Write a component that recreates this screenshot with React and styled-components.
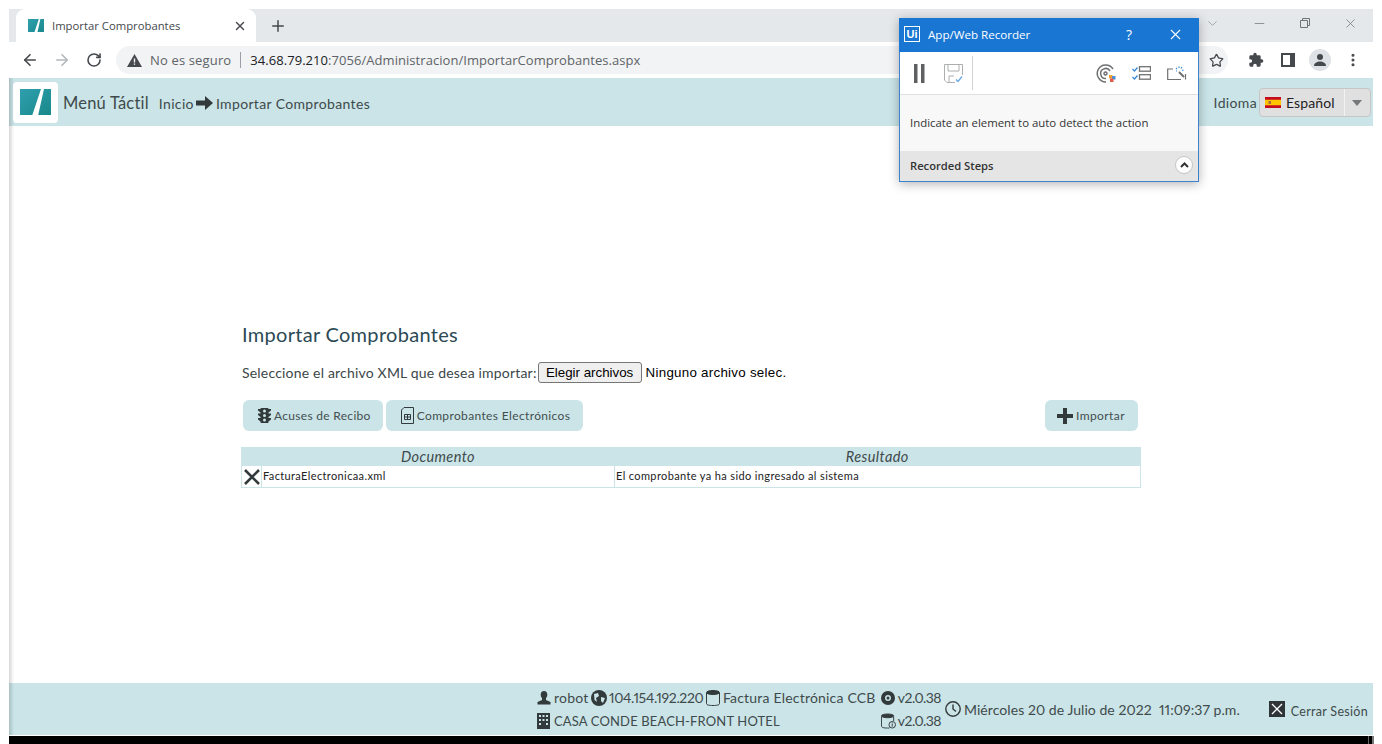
import styled, { createGlobalStyle } from "styled-components";
import { ArrowLeft, ArrowRight, RotateCw, Star, Plus, X, ChevronDown, Minus, MoreVertical } from "lucide-react";

const Global = createGlobalStyle`
  html, body { margin: 0; padding: 0; background: #fff; overflow: hidden; }
  * { box-sizing: border-box; }
`;

const quick = `"Lato", "Open Sans", sans-serif`;
const ui = `"Open Sans", "Noto Sans", sans-serif`;
const teal = "#cae4e7";

const Logo = ({ size = 31 }) => (
  <svg width={size} height={size * 0.87} viewBox="0 0 31 27">
    <defs>
      <linearGradient id="lg" x1="0" y1="0" x2="1" y2="1">
        <stop offset="0" stopColor="#2f9fae" />
        <stop offset="1" stopColor="#19888a" />
      </linearGradient>
    </defs>
    <path d="M0 0H21L12 27H0Z M24 0H31V27H18Z" fill="url(#lg)" />
  </svg>
);

const App = () => {
  return (
    <Page>
      <Global />
      <Window>
        <TabStrip>
          <Tab>
            <Logo size={16} />
            <TabTitle>Importar Comprobantes</TabTitle>
            <X size={14} color="#45484c" strokeWidth={2.4} />
          </Tab>
          <NewTab>
            <Plus size={18} color="#45484c" strokeWidth={2} />
          </NewTab>
          <WinControls>
            <ChevronDown size={15} color="#8a8d91" strokeWidth={1.2} />
            <Minus size={15} color="#70757a" strokeWidth={1.2} />
            <svg width="12" height="12" viewBox="0 0 12 12" fill="none" stroke="#70757a">
              <path d="M1.5 3.5h7v7h-7zM3.5 3.500v-2h7v7h-2" />
            </svg>
            <X size={15} color="#70757a" strokeWidth={1.2} />
          </WinControls>
        </TabStrip>
        <Toolbar>
          <NavIcons>
            <ArrowLeft size={18} color="#45484c" strokeWidth={2.2} />
            <ArrowRight size={18} color="#b4b7ba" strokeWidth={2.2} />
            <RotateCw size={16} color="#45484c" strokeWidth={2.4} />
          </NavIcons>
          <Omnibox>
            <svg width="15" height="13" viewBox="0 0 15 13">
              <path d="M7.5 0L15 13H0Z" fill="#45484c" />
              <path d="M6.8 4.5h1.4v4H6.800zM6.800 9.400h1.400v1.400H6.800z" fill="#f1f3f4" />
            </svg>
            <Insecure>No es seguro</Insecure>
            <OmniSep />
            <Url>
              <b>34.68.79.210</b>:7056/Administracion/ImportarComprobantes.aspx
            </Url>
            <OmniStar>
              <Star size={15} color="#45484c" strokeWidth={2} />
            </OmniStar>
          </Omnibox>
          <ToolIcons>
            <Puzzle width="16" height="16" viewBox="0 0 24 24" fill="#45484c">
              <path d="M20.5 11H19V7a2 2 0 0 0-2-2h-4V3.500a2.500 2.500 0 0 0-5 0V5H4a2 2 0 0 0-2 2v3.800h1.500a2.700 2.700 0 0 1 0 5.400H2V20a2 2 0 0 0 2 2h3.800v-1.500a2.700 2.700 0 0 1 5.400 0V22H17a2 2 0 0 0 2-2v-4h1.500a2.500 2.500 0 0 0 0-5z" />
            </Puzzle>
            <svg width="14" height="14" viewBox="0 0 14 14">
              <path d="M0 0H14V14H0Z M2 2V12H9V2Z" fill="#45484c" fillRule="evenodd" />
            </svg>
            <Avatar>
              <svg width="14" height="14" viewBox="0 0 14 14" fill="#45484c">
                <circle cx="7" cy="4" r="3" />
                <path d="M1 13c0-3 3-4.500 6-4.500s6 1.500 6 4.500z" />
              </svg>
            </Avatar>
            <MoreVertical size={16} color="#45484c" strokeWidth={2.6} />
          </ToolIcons>
        </Toolbar>
        <Content>
          <Header>
            <LogoBox>
              <Logo />
            </LogoBox>
            <Brand>Menú Táctil</Brand>
            <Crumb>Inicio</Crumb>
            <svg width="17" height="14" viewBox="0 0 17 14" fill="#333a3c">
              <path d="M0 4.500H9V0L17 7L9 14V9.500H0Z" />
            </svg>
            <Crumb>Importar Comprobantes</Crumb>
            <Lang>
              <Crumb>Idioma</Crumb>
              <LangSelect>
                <LangValue>
                  <svg width="16" height="11" viewBox="0 0 16 11">
                    <rect width="16" height="11" fill="#c60b1e" />
                    <rect y="2.750" width="16" height="5.500" fill="#ffc400" />
                    <rect x="3.500" y="4" width="2.500" height="3" fill="#ad6a3a" />
                  </svg>
                  Español
                </LangValue>
                <LangArrow />
              </LangSelect>
            </Lang>
          </Header>
          <Main>
            <Panel>
              <Title>Importar Comprobantes</Title>
              <PickerRow>
                <PickerLabel>Seleccione el archivo XML que desea importar:</PickerLabel>
                <FileButton>Elegir archivos</FileButton>
                <FileName>Ninguno archivo selec.</FileName>
              </PickerRow>
              <Actions>
                <ActionButton>
                  <svg width="13" height="15" viewBox="0 0 13 15" fill="#333a3c">
                    <path d="M0 1H2.500V.8A.8 .8 0 0 1 3.300 0H9.700A.8 .8 0 0 1 10.500 .8V1H13V2.500L10.500 4.500V5.500H13V7L10.500 9V10H13V11.500L10.500 13.500V14.200A.8 .8 0 0 1 9.700 15H3.300A.8 .8 0 0 1 2.500 14.200V13.500L0 11.500V10H2.500V9L0 7V5.500H2.500V4.500L0 2.500Z" />
                    <circle cx="6.500" cy="3" r="1.500" fill={teal} />
                    <circle cx="6.500" cy="7.500" r="1.500" fill={teal} />
                    <circle cx="6.500" cy="12" r="1.500" fill={teal} />
                  </svg>
                  Acuses de Recibo
                </ActionButton>
                <DocButton>
                  <svg width="13" height="17" viewBox="0 0 13 17" fill="none" stroke="#333a3c">
                    <path d="M3 .5H12.500V16.500H.5V3Z" />
                    <path d="M3.500 7.500H9.500V12.500H3.500ZM3.500 10H9.500M6.500 7.500V12.500" />
                  </svg>
                  Comprobantes Electrónicos
                </DocButton>
                <ImportButton>
                  <svg width="16" height="16" viewBox="0 0 16 16" fill="#333a3c">
                    <path d="M6 0H10V6H16V10H10V16H6V10H0V6H6Z" />
                  </svg>
                  Importar
                </ImportButton>
              </Actions>
              <Table>
                <thead>
                  <tr>
                    <HeadCell />
                    <HeadCell>Documento</HeadCell>
                    <HeadCell>Resultado</HeadCell>
                  </tr>
                </thead>
                <tbody>
                  <tr>
                    <IconCell>
                      <svg width="16" height="16" viewBox="0 0 16 16" stroke="#333a3c" strokeWidth="2.600">
                        <path d="M1 1L15 15M15 1L1 15" />
                      </svg>
                    </IconCell>
                    <Cell>FacturaElectronicaa.xml</Cell>
                    <Cell>El comprobante ya ha sido ingresado al sistema</Cell>
                  </tr>
                </tbody>
              </Table>
            </Panel>
          </Main>
          <Footer>
            <InfoBlock>
              <InfoRow>
                <InfoItem $gap={3}>
                  <svg width="14" height="14" viewBox="0 0 14 14" fill="#333a3c">
                    <ellipse cx="7" cy="3.800" rx="3.300" ry="3.800" />
                    <path d="M5 7H9V9L13.500 11V13.500H.5V11L5 9Z" />
                  </svg>
                  robot
                </InfoItem>
                <InfoItem $gap={2}>
                  <svg width="16" height="16" viewBox="0 0 16 16">
                    <circle cx="8" cy="8" r="8" fill="#333a3c" />
                    <path d="M3 4L7 3L8 6L5 8L6 12L3.500 10ZM10 7L14 8L12 13L10 11Z" fill={teal} />
                  </svg>
                  <Digits $track={-0.33}>104.154.192.220</Digits>
                </InfoItem>
                <InfoItem $gap={3}>
                  <svg width="14" height="16" viewBox="0 0 14 16" fill="none" stroke="#333a3c">
                    <path d="M.5 3V13.500C.5 15 3 15.500 7 15.500S13.500 15 13.500 13.500V3" />
                    <ellipse cx="7" cy="2.500" rx="6.500" ry="2" fill="#333a3c" />
                  </svg>
                  Factura Electrónica CCB
                </InfoItem>
                <InfoItem $gap={3}>
                  <svg width="14" height="14" viewBox="0 0 14 14">
                    <circle cx="7" cy="7" r="7" fill="#333a3c" />
                    <circle cx="7" cy="7" r="3" fill={teal} />
                    <circle cx="7" cy="7" r="1.500" fill="#333a3c" />
                  </svg>
                  <Digits $track={-0.55}>v2.0.38</Digits>
                </InfoItem>
              </InfoRow>
              <InfoRow>
                <InfoItem $gap={4}>
                  <svg width="13" height="16" viewBox="0 0 13 16">
                    <rect width="13" height="16" fill="#333a3c" />
                    <path d="M2 2h2v2H2zM5.500 2h2v2h-2zM9 2h2v2H9zM2 6h2v2H2zM5.500 6h2v2h-2zM9 6h2v2H9zM2 10h2v2H2zM9 10h2v2H9z" fill={teal} />
                  </svg>
                  <Caps>CASA CONDE BEACH-FRONT HOTEL</Caps>
                </InfoItem>
                <InfoItem $gap={2}>
                  <svg width="15" height="16" viewBox="0 0 16 16" fill="none" stroke="#333a3c">
                    <path d="M.5 3V13.500C.5 15 3 15.500 7 15.500H9M13.500 3V8" />
                    <ellipse cx="7" cy="2.500" rx="6.500" ry="2" fill="#333a3c" />
                    <circle cx="12" cy="12" r="3.500" />
                    <path d="M12 11V14M12 9.500V10.500" />
                  </svg>
                  <Digits $track={-0.55}>v2.0.38</Digits>
                </InfoItem>
              </InfoRow>
            </InfoBlock>
            <Clock>
              <svg width="16" height="16" viewBox="0 0 16 16" fill="none" stroke="#333a3c" strokeWidth="1.400">
                <circle cx="8" cy="8" r="7.200" />
                <path d="M8 3.500V8L11 10.500" />
              </svg>
              <Digits $track={0.06}>Miércoles 20 de Julio de 2022&nbsp; 11:09:37 p.m.</Digits>
            </Clock>
            <Logout>
              <svg width="16" height="16" viewBox="0 0 16 16">
                <rect width="16" height="16" fill="#2f3537" />
                <path d="M3 3L13 13M13 3L3 13" stroke="#fff" strokeWidth="1.300" />
              </svg>
              <LogoutText>Cerrar Sesión</LogoutText>
            </Logout>
          </Footer>
        </Content>
        <Taskbar>
          <TaskClock>22:00</TaskClock>
        </Taskbar>
      </Window>
      <Recorder>
        <RecTitle>
          <RecLogo>Ui</RecLogo>
          <RecName>App/Web Recorder</RecName>
          <RecHelp>?</RecHelp>
          <X size={17} color="#fff" strokeWidth={1.5} />
        </RecTitle>
        <RecTools>
          <svg width="11" height="19" viewBox="0 0 11 19" fill="#5f6062">
            <rect width="3.500" height="19" />
            <rect x="7" width="3.500" height="19" />
          </svg>
          <RecSave width="19" height="19" viewBox="0 0 19 19" fill="none" stroke="#adaeaf">
            <path d="M.5 .5H18.500V11M11 18.500H3L.5 16V.5" />
            <path d="M4 .5V7H15V.5M5 18V12H10" />
            <path d="M12 15.500L14 17.500L18 12.500" stroke="#6aa9e4" strokeWidth="1.300" />
          </RecSave>
          <RecDivider />
          <RecRight>
            <svg width="20" height="19" viewBox="0 0 20 19" fill="none" stroke="#6f7072" strokeWidth="1.500">
              <path d="M17 5A8.500 8.500 0 1 0 10 18" />
              <path d="M14 7A5 5 0 1 0 10 14.500" />
              <circle cx="9.500" cy="9.500" r="1.500" />
              <rect x="13" y="11" width="3.500" height="3.500" fill="#f0a030" stroke="none" />
              <rect x="16" y="12" width="3.500" height="3.500" fill="#4a90d9" stroke="none" />
              <rect x="14" y="14.500" width="3.500" height="3.500" fill="#e25b4a" stroke="none" />
            </svg>
            <svg width="19" height="14" viewBox="0 0 19 14" fill="none" stroke="#6f7072" strokeWidth="1.300">
              <rect x="7.500" y=".7" width="11" height="4.500" />
              <rect x="7.500" y="8.700" width="11" height="4.500" />
              <path d="M.5 3L2.500 5L5.500 1.500M.5 11L2.500 13L5.500 9.500" stroke="#3a8ad8" />
            </svg>
            <svg width="20" height="15" viewBox="0 0 20 15" fill="none" stroke="#6f7072" strokeWidth="1.200">
              <path d="M6 3H.7V13.500H14M18.500 8V13.500" />
              <path d="M12 6L17 11" strokeWidth="2" />
              <path d="M9 2L10 3M12 .5V2M15 1L14 2.500M16.500 4L15 4.500M9 5L10 5" stroke="#3a8ad8" />
            </svg>
          </RecRight>
        </RecTools>
        <RecBody>Indicate an element to auto detect the action</RecBody>
        <RecSteps>
          Recorded Steps
          <RecCollapse>
            <svg width="9" height="6" viewBox="0 0 9 6" fill="none" stroke="#333" strokeWidth="2">
              <path d="M1 5L4.500 1.500L8 5" />
            </svg>
          </RecCollapse>
        </RecSteps>
      </Recorder>
    </Page>
  );
};

const Page = styled.div`
  position: relative;
  width: 1382px;
  height: 744px;
  padding: 9px 9px 0;
  overflow: hidden;
  font-family: ${quick};
`;

const Window = styled.div`
  display: flex;
  flex-direction: column;
  height: 735px;
`;

const TabStrip = styled.div`
  display: flex;
  align-items: flex-end;
  height: 33px;
  padding-left: 7px;
  background: #e5e8eb;
`;

const Tab = styled.div`
  display: flex;
  align-items: center;
  width: 240px;
  height: 33px;
  padding: 0 9px 0 12px;
  background: #fff;
  border-radius: 9px 9px 0 0;
`;

const TabTitle = styled.span`
  flex: 1;
  margin-left: 8px;
  font: 11.3px ${ui};
  color: #45484c;
`;

const NewTab = styled.div`
  display: flex;
  align-items: center;
  height: 33px;
  margin-left: 13px;
`;

const WinControls = styled.div`
  display: flex;
  align-items: center;
  justify-content: space-between;
  width: 153px;
  height: 28px;
  margin: 0 15px 5px auto;
`;

const Toolbar = styled.div`
  display: flex;
  align-items: center;
  height: 36px;
  background: #fff;
`;

const NavIcons = styled.div`
  display: flex;
  align-items: center;
  gap: 14px;
  width: 107px;
  padding-left: 12px;
  svg:last-child {
    margin-left: 1px;
  }
`;

const Omnibox = styled.div`
  display: flex;
  align-items: center;
  width: 1112px;
  height: 28px;
  padding: 0 4px 0 11px;
  background: #f1f3f4;
  border-radius: 14px;
`;

const Insecure = styled.span`
  margin-left: 8px;
  font: 13px ${ui};
  letter-spacing: 0.15px;
  color: #5f6368;
`;

const OmniSep = styled.span`
  width: 1px;
  height: 16px;
  margin: 0 9px;
  background: #9aa0a6;
`;

const Url = styled.span`
  flex: 1;
  font: 13px ${ui};
  letter-spacing: 0.05px;
  color: #5f6368;
  b {
    font-weight: 400;
    color: #202124;
  }
`;

const OmniStar = styled.span`
  display: flex;
`;

const ToolIcons = styled.div`
  display: flex;
  align-items: center;
  gap: 14px;
  padding-left: 20px;
`;

const Puzzle = styled.svg`
  margin-right: 3px;
`;

const Avatar = styled.span`
  display: flex;
  align-items: center;
  justify-content: center;
  width: 22px;
  height: 22px;
  border-radius: 50%;
  background: #dee1e6;
`;

const Content = styled.div`
  position: relative;
  display: flex;
  flex: 1;
  flex-direction: column;
  min-height: 0;
  &::before {
    content: "";
    position: absolute;
    top: 0;
    bottom: 0;
    left: 0;
    width: 5px;
    background: linear-gradient(to right, rgba(0, 0, 0, 0.16), rgba(0, 0, 0, 0));
  }
`;

const Header = styled.header`
  display: flex;
  align-items: center;
  height: 48px;
  padding: 2px 2px 0 4px;
  background: ${teal};
  color: #3f4a4c;
`;

const LogoBox = styled.div`
  display: flex;
  align-items: center;
  justify-content: center;
  width: 45px;
  height: 41px;
  margin: -2px 5px 0 0;
  background: #fff;
  border-radius: 4px;
`;

const Brand = styled.span`
  margin-right: 7px;
  font-size: 16.5px;
  letter-spacing: 0.2px;
`;

const Crumb = styled.span`
  margin: 0 2px 0 3px;
  font-size: 14px;
  letter-spacing: 0.35px;
`;

const Lang = styled.div`
  display: flex;
  align-items: center;
  margin: -2px 0 0 auto;
`;

const LangSelect = styled.div`
  display: flex;
  width: 112px;
  height: 29px;
  background: #e0e0e0;
  border: 1px solid #c6c6c6;
  border-radius: 4px;
`;

const LangValue = styled.div`
  display: flex;
  flex: 1;
  align-items: center;
  gap: 5px;
  padding-left: 5px;
  font-size: 14px;
  letter-spacing: 0.1px;
  color: #222;
  border-right: 1px solid #f2f2f2;
`;

const LangArrow = styled.div`
  position: relative;
  width: 25px;
  &::after {
    content: "";
    position: absolute;
    top: 11px;
    left: 7px;
    border: 5.5px solid transparent;
    border-top: 6px solid #77787a;
    border-bottom: 0;
  }
`;

const Main = styled.main`
  flex: 1;
  padding: 196px 0 0 232px;
  background: #fff;
`;

const Panel = styled.section`
  width: 900px;
`;

const Title = styled.h2`
  margin: 0 0 0 1px;
  font-size: 20px;
  line-height: 24px;
  font-weight: 400;
  letter-spacing: 0.3px;
  color: #2c4a55;
`;

const PickerRow = styled.div`
  display: flex;
  align-items: center;
  height: 22px;
  margin: 15px 0 0 1px;
`;

const PickerLabel = styled.span`
  font-size: 14px;
  letter-spacing: 0.19px;
  color: #3b4749;
`;

const FileButton = styled.button`
  width: 104px;
  height: 21px;
  margin: 0 4px 0 1px;
  padding: 0;
  font: 13.33px "Liberation Sans", sans-serif;
  color: #000;
  background: #efefef;
  border: 1px solid #767676;
  border-radius: 3px;
`;

const FileName = styled.span`
  font: 13.33px "Liberation Sans", sans-serif;
  letter-spacing: 0.27px;
  color: #000;
`;

const Actions = styled.div`
  display: flex;
  gap: 3px;
  margin: 17px 3px 16px 2px;
`;

const ActionButton = styled.div`
  display: flex;
  align-items: center;
  gap: 3px;
  height: 31px;
  padding: 0 12px 0 15px;
  font-size: 12px;
  letter-spacing: 0.3px;
  color: #434e50;
  background: ${teal};
  border-radius: 6px;
`;

const DocButton = styled(ActionButton)`
  padding-right: 13px;
  letter-spacing: 0.36px;
`;

const ImportButton = styled(ActionButton)`
  margin-left: auto;
  padding: 0 13px 0 12px;
  letter-spacing: 0.42px;
`;

const Table = styled.table`
  width: 900px;
  border-collapse: collapse;
  table-layout: fixed;
  border: 1px solid ${teal};
  font-size: 11px;
  color: #222;
  th:first-child,
  td:first-child {
    width: 20px;
  }
  th:nth-child(2),
  td:nth-child(2) {
    width: 353px;
  }
`;

const HeadCell = styled.th`
  height: 18px;
  padding: 0;
  font-size: 14.5px;
  line-height: 17px;
  font-weight: 400;
  font-style: italic;
  letter-spacing: 0.4px;
  color: #3f4a4c;
  background: ${teal};
`;

const Cell = styled.td`
  height: 22px;
  padding: 0 1px 2px;
  letter-spacing: 0.37px;
  border-left: 1px solid ${teal};
`;

const IconCell = styled.td`
  padding: 2px 0 0 2px;
  line-height: 0;
`;

const Footer = styled.footer`
  display: flex;
  align-items: center;
  height: 52px;
  padding: 0 0 0 528px;
  background: ${teal};
  color: #3f4a4c;
`;

const InfoBlock = styled.div`
  display: flex;
  flex-direction: column;
  gap: 5px;
  width: 404px;
`;

const InfoRow = styled.div`
  display: flex;
  gap: 2.5px;
  height: 18px;
  & > :last-child {
    margin-left: auto;
  }
`;

const InfoItem = styled.span`
  display: flex;
  align-items: center;
  gap: ${(p) => p.$gap}px;
  font-size: 14px;
  letter-spacing: 0.2px;
  white-space: nowrap;
`;

const Digits = styled.span`
  font-variant-numeric: proportional-nums;
  letter-spacing: ${(p) => p.$track}px;
`;

const Caps = styled.span`
  font-size: 13px;
  letter-spacing: 0.15px;
`;

const Clock = styled(InfoItem)`
  gap: 3px;
  margin-left: 4px;
`;

const Logout = styled.span`
  display: flex;
  align-items: center;
  gap: 6px;
  margin-left: auto;
  padding-right: 5px;
  font-size: 12.5px;
  letter-spacing: 0.3px;
`;

const LogoutText = styled.span`
  padding-top: 4px;
`;

const Taskbar = styled.div`
  position: relative;
  height: 8px;
  margin: 1px -1px 0 0;
  background: #000;
  border-right: 2px solid #777;
  &::after {
    content: "";
    position: absolute;
    top: 0;
    bottom: 0;
    right: 3px;
    width: 1px;
    background: #666;
  }
`;

const TaskClock = styled.span`
  position: absolute;
  top: 5px;
  left: 1266px;
  font: 10px ${ui};
  color: #fff;
`;

const Recorder = styled.aside`
  position: absolute;
  top: 18px;
  left: 899px;
  display: flex;
  flex-direction: column;
  width: 300px;
  height: 164px;
  font-family: ${ui};
  background: #fff;
  border: 1px solid #3d82cf;
  box-shadow: 0 2px 10px rgba(0, 0, 0, 0.3);
`;

const RecTitle = styled.div`
  display: flex;
  align-items: center;
  flex: none;
  height: 34px;
  margin: -1px -1px 0;
  padding: 0 15px 2px 5px;
  color: #fff;
  background: #1976d2;
`;

const RecLogo = styled.span`
  width: 16px;
  height: 16px;
  font: 700 11px/14px "Liberation Sans", sans-serif;
  text-align: center;
  border: 1px solid #fff;
`;

const RecName = styled.span`
  flex: 1;
  margin-left: 8px;
  font-size: 11.6px;
`;

const RecHelp = styled.span`
  margin-right: 35px;
  font-size: 14px;
`;

const RecTools = styled.div`
  display: flex;
  align-items: center;
  flex: none;
  height: 43px;
  padding: 0 11px 0 14px;
  border-bottom: 1px solid #e0e0e0;
`;

const RecSave = styled.svg`
  margin-left: 19px;
`;

const RecDivider = styled.span`
  width: 1px;
  height: 34px;
  margin-left: 9px;
  background: #d4d4d4;
`;

const RecRight = styled.div`
  display: flex;
  align-items: center;
  gap: 16px;
  margin-left: auto;
`;

const RecBody = styled.div`
  display: flex;
  flex: 1;
  align-items: center;
  padding: 0 0 1px 10px;
  font-size: 11.4px;
  color: #333;
  background: #f8f8f8;
`;

const RecSteps = styled.div`
  display: flex;
  align-items: center;
  justify-content: space-between;
  flex: none;
  height: 30px;
  padding: 0 5px 2px 10px;
  font-size: 11.2px;
  font-weight: 600;
  color: #333;
  background: #e5e5e5;
`;

const RecCollapse = styled.span`
  display: flex;
  align-items: center;
  justify-content: center;
  width: 18px;
  height: 18px;
  background: #fff;
  border: 1px solid #c4c4c4;
  border-radius: 50%;
`;

export default App;
